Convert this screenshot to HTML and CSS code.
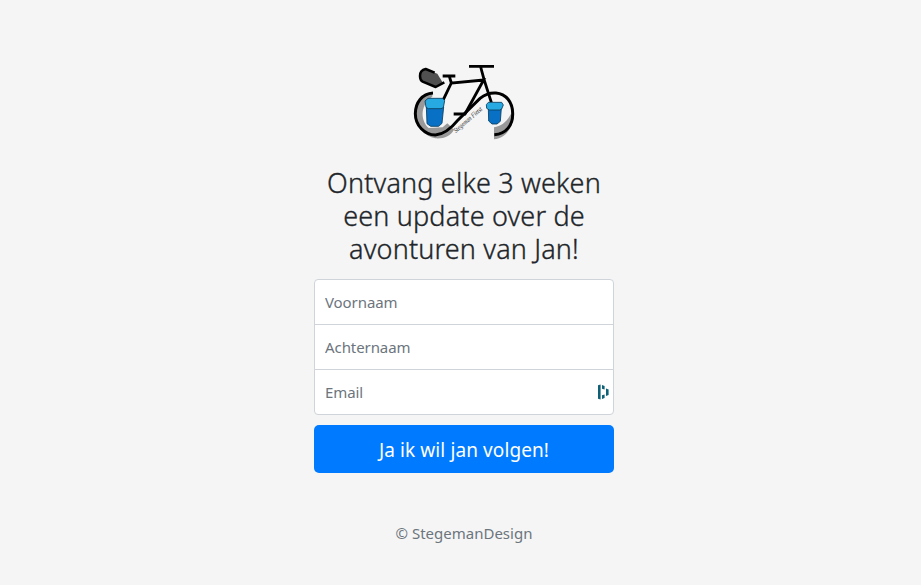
FILE: index.html
```html
<!DOCTYPE html>
<html lang="nl">
<head>
<meta charset="utf-8">
<title>StegemanDesign</title>
<link rel="stylesheet" href="styles.css">
</head>
<body>
<form class="signup">
  <svg class="logo" viewBox="0 0 336 264" fill="none" stroke="#000">
    <path d="M73 106C48 108 24 134 24 168C26 205 50 236 82 241C108 243 128 233 138 215L118 196L104 208L62 210C40 190 32 145 73 116Z" fill="#999" stroke="none"/>
    <path d="M310 166C298 190 280 205 258 208V244C290 242 312 215 317 174Z" fill="#999" stroke="none"/>
    <path d="M75 105C42 107 22 134 22 167C22 203 50 230 82 231C111 230 133 207 151 185L216 121Q239 103 264 105C294 107 314 133 314 166C315 201 295 228 259 230" stroke-width="9"/>
    <path d="M137 168H171L227 66L130 75L106 125M183 25H258M218 27L228 64L250 133M104 54H142M124 55L130 75" stroke-width="8.5"/>
    <path d="M51 33L88 47L105 75L83 88L44 73Q33 65 35 53Q38 36 51 33Z" fill="#505050" stroke="none"/>
    <path d="M80 44L53 33Q36 36 36 54Q36 67 44 71L83 87L109 73" stroke-width="7.5" stroke-linejoin="round"/>
    <g stroke="#073c5d" stroke-width="2.5">
      <path d="M55 147H107L102 196L92 205H68L57 197Z" fill="#0871c5"/>
      <path d="M60 121H104L110 128L106 149L99 152H61L54 148L51 129Z" fill="#27a9e1"/>
      <path d="M241 151H280L277 190L267 198H252L242 189Z" fill="#0871c5"/>
      <path d="M241 133H281L286 141L281 153L275 156H244L236 151L235 140Z" fill="#27a9e1"/>
    </g>
    <text class="logo-name" transform="translate(144 225) rotate(-41)" textLength="106" lengthAdjust="spacingAndGlyphs">Stegeman Fietst</text>
  </svg>
  <h1 class="title">Ontvang elke 3 weken<br>een update over de<br>avonturen van Jan!</h1>
  <div class="fields">
    <input class="field first" type="text" placeholder="Voornaam" aria-label="Voornaam">
    <input class="field second" type="text" placeholder="Achternaam" aria-label="Achternaam">
    <div class="email">
      <input class="field third" type="email" placeholder="Email" aria-label="Email">
      <svg class="manager" viewBox="0 0 12 16" fill="#0e6076"><path d="M1 1.2L3.6 .5V15.5L1 14.8ZM5 1L7.6 2V5.5L5 4.8ZM5 11.2L7.6 10.5V14L5 15ZM9 4.5L11.6 5.5V11L9 12Z"/></svg>
    </div>
  </div>
  <button class="submit" type="button">Ja ik wil jan volgen!</button>
  <p class="copyright">© StegemanDesign</p>
</form>
</body>
</html>
```

FILE: styles.css
```css
* { box-sizing: border-box; }
body {
  margin: 0;
  min-height: 585px;
  padding: 58px 0 0 7px;
  background: #f5f5f5;
  color: #212529;
  font-family: "Noto Sans", "Open Sans", sans-serif;
}
.signup {
  width: 300px;
  margin: 0 auto;
  display: flex;
  flex-direction: column;
  align-items: center;
}
.logo { width: 112px; height: 88px; display: block; }
.logo-name { font: italic 21px "Liberation Serif", serif; fill: #222; stroke: none; }
.title {
  margin: 20px 0 14px;
  font-size: 27px;
  font-weight: 300;
  line-height: 33px;
  letter-spacing: 0.17px;
  -webkit-text-stroke: 0.35px #212529;
  text-align: center;
  white-space: nowrap;
}
.fields { width: 300px; display: flex; flex-direction: column; }
.field {
  display: block;
  width: 100%;
  height: 46px;
  margin: 0;
  padding: 10px;
  border: 1px solid #ced4da;
  border-radius: 0;
  background: #fff;
  font: 15px/24px "Noto Sans", sans-serif;
  letter-spacing: -0.08px;
}
.field::placeholder { color: #6c757d; opacity: 1; }
.first { border-radius: 4px 4px 0 0; }
.second { margin-top: -1px; }
.email { position: relative; margin-top: -1px; }
.third { border-radius: 0 0 4px 4px; }
.manager { position: absolute; right: 5px; top: 15px; width: 12px; height: 16px; }
.submit {
  width: 300px;
  height: 48px;
  margin-top: 10px;
  padding: 2px 0 0;
  border: 0;
  border-radius: 5px;
  background: #007bff;
  color: #fff;
  font: 19px/30px "Noto Sans", sans-serif;
  letter-spacing: 0.1px;
}
.copyright {
  margin: 48px 0 0;
  color: #6c757d;
  font-size: 15px;
  line-height: 24px;
}
```
